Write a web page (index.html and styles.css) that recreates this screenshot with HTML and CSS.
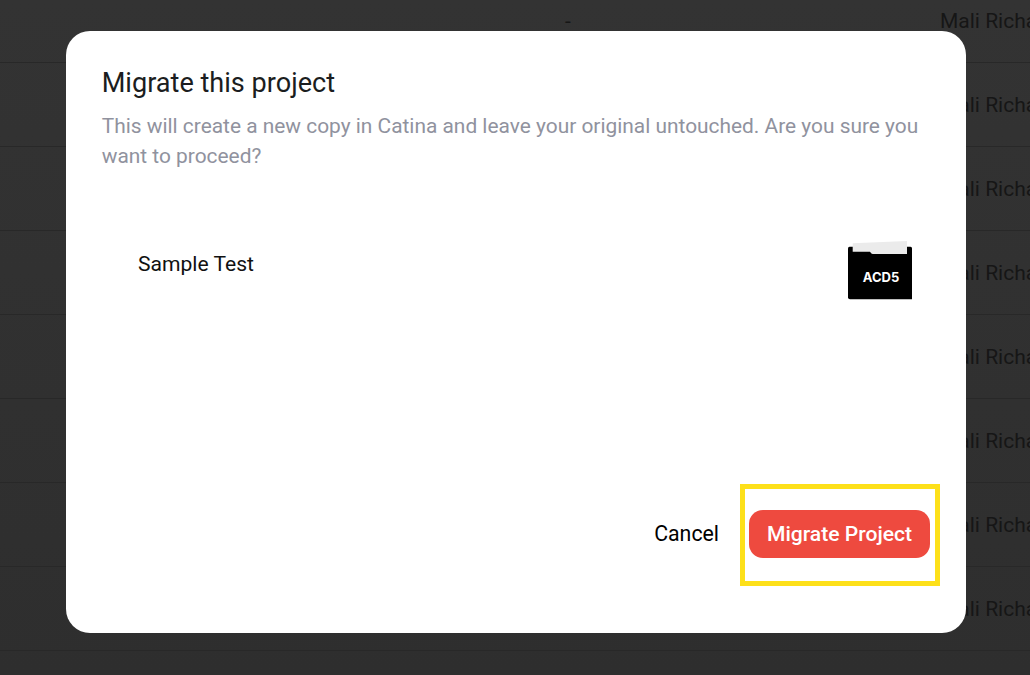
FILE: index.html
```html
<!DOCTYPE html>
<html lang="en">
<head>
<meta charset="utf-8">
<title>Migrate this project</title>
<link rel="stylesheet" href="styles.css">
</head>
<body>
<div class="table">
  <div class="row first"><span class="dash">-</span><span class="owner">Mali Richardson</span></div>
  <div class="row"><span class="dash"></span><span class="owner">Mali Richardson</span></div>
  <div class="row"><span class="dash"></span><span class="owner">Mali Richardson</span></div>
  <div class="row"><span class="dash"></span><span class="owner">Mali Richardson</span></div>
  <div class="row"><span class="dash"></span><span class="owner">Mali Richardson</span></div>
  <div class="row"><span class="dash"></span><span class="owner">Mali Richardson</span></div>
  <div class="row"><span class="dash"></span><span class="owner">Mali Richardson</span></div>
  <div class="row"><span class="dash"></span><span class="owner">Mali Richardson</span></div>
</div>
<div class="backdrop">
  <section class="modal">
    <h1 class="title">Migrate this project</h1>
    <p class="desc">This will create a new copy in Catina and leave your original untouched. Are you sure you want to proceed?</p>
    <div class="item">
      <span class="item-name">Sample Test</span>
      <svg class="folder" width="64" height="60" viewBox="0 0 64 60" aria-hidden="true">
        <path d="M1.500 6.700H62.500Q64 6.700 64 8.200V59.300H2Q0 59.300 0 57.300V8.200Q0 6.700 1.500 6.700Z" fill="#000"/>
        <path d="M4.700 3.300L59 1V14H25Q23.500 14 23 13L22 11.700H4.700Z" fill="#ebebeb"/>
        <text class="folder-label" x="33" y="41.700" text-anchor="middle">ACD5</text>
      </svg>
    </div>
    <footer class="actions">
      <button class="btn-cancel" type="button">Cancel</button>
      <span class="highlight-wrap">
        <button class="btn-primary" type="button">Migrate Project</button>
        <span class="highlight"></span>
      </span>
    </footer>
  </section>
</div>
</body>
</html>
```
FILE: styles.css
```css
* { box-sizing: border-box; }
html, body { margin: 0; height: 100%; overflow: hidden; }
body {
  position: relative;
  width: 1030px;
  height: 675px;
  font-family: Roboto, "Liberation Sans", sans-serif;
  background: #2f2f2f;
  background-image: linear-gradient(180deg, #333333 0%, #2e2e2e 100%);
}
.table { display: flex; flex-direction: column; }
.row {
  display: flex;
  align-items: center;
  flex: none;
  height: 84px;
  border-bottom: 1px solid #282828;
  padding-left: 565px;
  font-size: 21px;
  color: #161616;
  white-space: nowrap;
  overflow: hidden;
}
.row.first { height: 63px; padding-bottom: 21px; }
.dash { width: 375px; flex: none; }
.owner { flex: none; }
.backdrop {
  position: absolute;
  inset: 0;
}
.modal {
  position: absolute;
  left: 66px;
  top: 31px;
  width: 900px;
  height: 602px;
  display: flex;
  flex-direction: column;
  background: #fff;
  border-radius: 24px;
  padding: 36px 36px 0 35.700px;
}
.title {
  margin: 0;
  font-size: 27.100px;
  line-height: 32px;
  font-weight: 400;
  color: #1b1d20;
}
.desc {
  margin: 12px 0 0;
  font-size: 20.900px;
  line-height: 30px;
  color: #90929e;
}
.item {
  display: flex;
  justify-content: space-between;
  align-items: flex-start;
  margin-top: 69px;
  padding: 0 18px 0 36.300px;
}
.item-name {
  margin-top: 9px;
  font-size: 21.100px;
  line-height: 30px;
  color: #111;
}
.folder { display: block; }
.folder-label {
  font-family: Inter, Roboto, sans-serif;
  font-size: 13px;
  font-weight: 700;
  fill: #fff;
}
.actions {
  display: flex;
  justify-content: flex-end;
  align-items: center;
  gap: 30px;
  margin-top: 210px;
}
.btn-cancel {
  padding: 0 0 2px;
  border: 0;
  background: none;
  font: inherit;
  font-size: 21.300px;
  color: #000;
}
.highlight-wrap { position: relative; display: block; }
.btn-primary {
  display: block;
  width: 181px;
  height: 48px;
  padding: 0 0 2px;
  border: 0;
  border-radius: 14px;
  background: #ee4a3f;
  color: #fff;
  font: inherit;
  font-size: 21.100px;
  font-weight: 500;
}
.highlight {
  position: absolute;
  left: -9px;
  top: -26px;
  width: 200px;
  height: 102px;
  border: 5px solid #fde01a;
}
```
